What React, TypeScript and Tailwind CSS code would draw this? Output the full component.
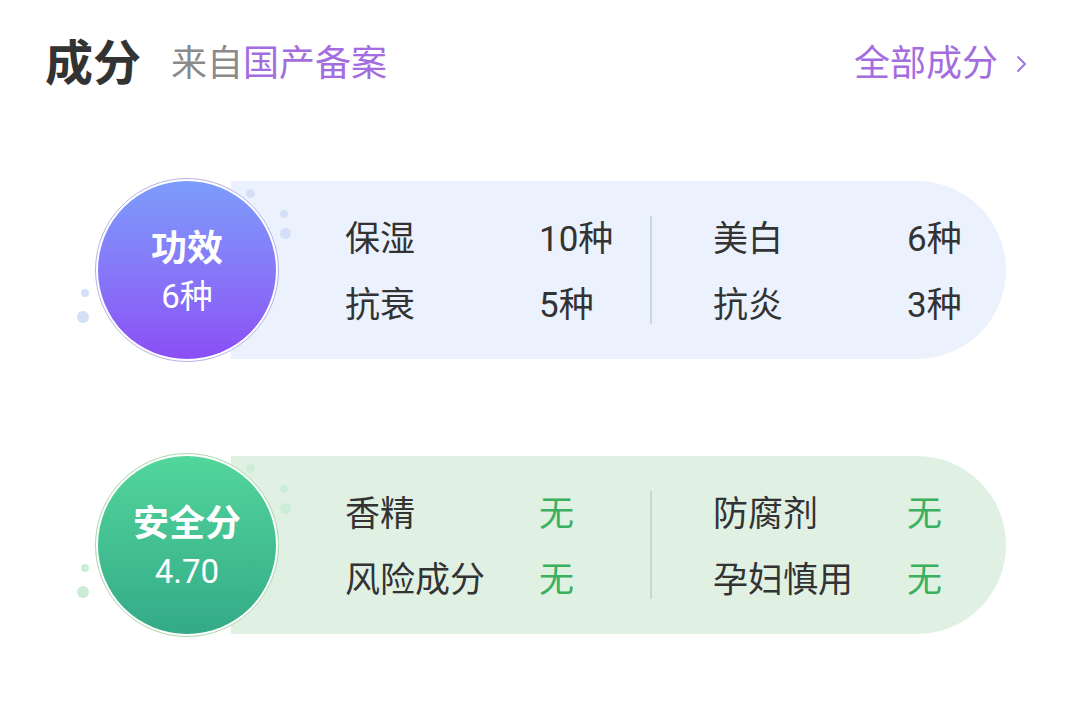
import React from "react";

type Item = { label: string; value: string };

type CardProps = {
  title: string;
  value: string;
  circle: string;
  ring: string;
  pill: string;
  dot: string;
  divider: string;
  valueColor: string;
  left: Item[];
  right: Item[];
};

const font = { fontFamily: '"Roboto", "Noto Sans CJK SC", sans-serif' };

const Dots = ({ color }: { color: string }) => (
  <>
    <span className={`absolute left-[151px] top-[11px] h-[9px] w-[9px] rounded-full ${color}`} />
    <span className={`absolute left-[185px] top-[32px] h-[8px] w-[8px] rounded-full ${color}`} />
    <span className={`absolute left-[185px] top-[50px] h-[11px] w-[11px] rounded-full ${color}`} />
    <span className={`absolute left-[-14px] top-[111px] h-[8px] w-[8px] rounded-full ${color}`} />
    <span className={`absolute left-[-18px] top-[133px] h-[12px] w-[12px] rounded-full ${color}`} />
  </>
);

const Column = ({ items, valueColor }: { items: Item[]; valueColor: string }) => (
  <div className="flex flex-col gap-[22px] pt-[5px]">
    {items.map((item) => (
      <div key={item.label} className="flex items-center text-[35px] leading-[44px] text-[#333333]">
        <span className="w-[194px]">{item.label}</span>
        <span className={valueColor}>{item.value}</span>
      </div>
    ))}
  </div>
);

const StatCard = (props: CardProps) => (
  <div className="relative flex h-[184px] items-center pl-[95px]">
    <div className="relative z-10 h-[184px] w-[184px] shrink-0">
      <Dots color={props.dot} />
      <div className={`relative h-full w-full rounded-full border bg-white p-[2px] ${props.ring}`}>
        <div
          className={`flex h-full w-full flex-col items-center justify-center rounded-full pt-[4px] text-white ${props.circle}`}
        >
          <span className="text-[36px] font-bold leading-[46px]">{props.title}</span>
          <span className="mt-[4px] text-[33px] leading-[42px]">{props.value}</span>
        </div>
      </div>
    </div>
    <div
      className={`ml-[-48px] flex h-[178px] w-[775px] items-center rounded-r-full pl-[114px] ${props.pill}`}
    >
      <div className="w-[305px]">
        <Column items={props.left} valueColor={props.valueColor} />
      </div>
      <div className={`h-[108px] w-[2px] ${props.divider}`} />
      <div className="pl-[61px]">
        <Column items={props.right} valueColor={props.valueColor} />
      </div>
    </div>
  </div>
);

export default function App() {
  return (
    <div className="h-[726px] w-[1080px] bg-white" style={font}>
      <div className="flex h-[128px] items-center justify-between pl-[45px] pr-[52px]">
        <div className="flex items-center">
          <span className="text-[48px] font-bold text-[#333333]">成分</span>
          <span className="ml-[30px] text-[36px] text-[#8a8a8a]">
            来自<span className="text-[#a46ddf]">国产备案</span>
          </span>
        </div>
        <div className="flex items-center text-[36px] text-[#a46ddf]">
          <span>全部成分</span>
          <svg className="ml-[18px]" width="12" height="20" viewBox="0 0 12 20" fill="none">
            <path d="M2 3l7 7-7 7" stroke="#a46ddf" strokeWidth="1.8" strokeLinecap="round" strokeLinejoin="round" />
          </svg>
        </div>
      </div>

      <div className="mt-[50px]">
        <StatCard
          title="功效"
          value="6种"
          circle="bg-gradient-to-b from-[#7c9cfb] to-[#8a4ef5]"
          ring="border-[#b4b3e8]"
          pill="bg-[#ebf2fe]"
          dot="bg-[#d5e0f8]"
          divider="bg-[#c8d6ec]"
          valueColor="text-[#333333]"
          left={[
            { label: "保湿", value: "10种" },
            { label: "抗衰", value: "5种" },
          ]}
          right={[
            { label: "美白", value: "6种" },
            { label: "抗炎", value: "3种" },
          ]}
        />
      </div>

      <div className="mt-[91px]">
        <StatCard
          title="安全分"
          value="4.70"
          circle="bg-gradient-to-b from-[#52d69b] to-[#34aa88]"
          ring="border-[#a9d9a9]"
          pill="bg-[#e0f1e4]"
          dot="bg-[#cbedd7]"
          divider="bg-[#c2dcc8]"
          valueColor="text-[#3bb05e]"
          left={[
            { label: "香精", value: "无" },
            { label: "风险成分", value: "无" },
          ]}
          right={[
            { label: "防腐剂", value: "无" },
            { label: "孕妇慎用", value: "无" },
          ]}
        />
      </div>
    </div>
  );
}
